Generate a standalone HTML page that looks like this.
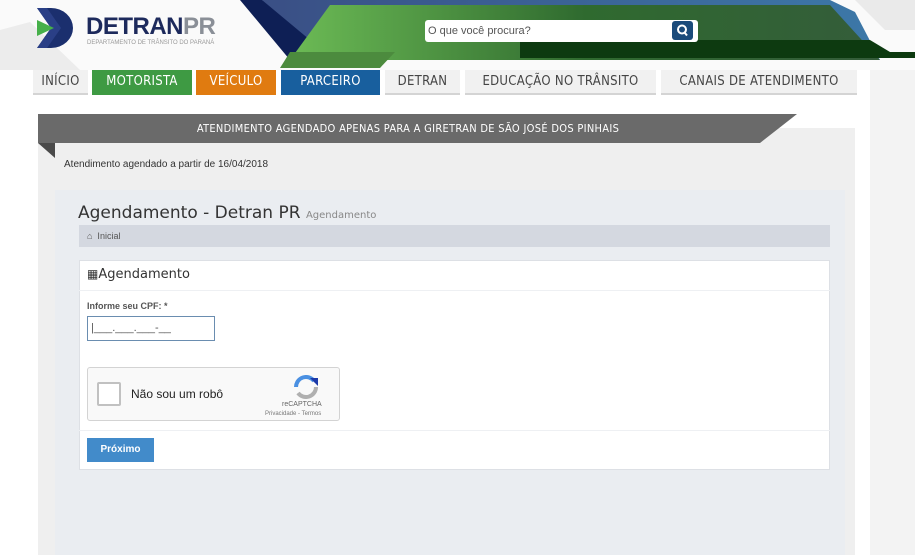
<!DOCTYPE html>
<html><head><meta charset="utf-8"><style>
*{margin:0;padding:0;box-sizing:border-box}
body{width:915px;height:555px;overflow:hidden;background:#fff;font-family:"Liberation Sans",sans-serif;position:relative}
.abs{position:absolute}
.tab{position:absolute;top:70px;height:25px;font:13px/24px "DejaVu Sans Condensed","Liberation Sans",sans-serif;text-align:center;color:#444;background:#f1f1f1;border-bottom:2px solid #d4d4d4;letter-spacing:.3px}
.tab.c{color:#fff;border-bottom-color:transparent}
</style></head><body>
<svg class="abs" style="left:0;top:0" width="915" height="555">
<defs>
<linearGradient id="g1" x1="0" x2="1"><stop offset="0" stop-color="#6cbb55"/><stop offset=".5" stop-color="#2f6a2f"/><stop offset="1" stop-color="#345c3a"/></linearGradient>
<linearGradient id="g2" x1="0" x2="1"><stop offset="0" stop-color="#3a4f85"/><stop offset="1" stop-color="#3c78a8"/></linearGradient>
</defs>
<rect width="915" height="70" fill="#fafafa"/>
<polygon points="0,30 30,22 80,70 0,70" fill="#ececec"/>
<polygon points="855,0 915,0 915,30 885,30" fill="#eaeaea"/>
<polygon points="262,0 830,0 855,12 880,60 300,60" fill="url(#g2)"/>
<polygon points="240,0 262,0 310,40 290,60" fill="#0e1f55"/>
<polygon points="330,5 830,5 880,60 290,60" fill="url(#g1)"/>
<polygon points="520,40 870,40 890,52 915,52 915,58 520,58" fill="#0d3a10"/>
<polygon points="280,68 290,52 395,52 380,68" fill="#4c8b3e"/>
<rect x="870" y="70" width="45" height="485" fill="#f3f3f3"/>
<rect x="38" y="128" width="817" height="430" fill="#efefef"/>
<polygon points="38,114 797,114 760,143 38,143" fill="#6a6a6a"/>
<polygon points="38,143 55,143 55,158" fill="#4a4a4a"/>
<path d="M37,8 h14 a22,20 0 0 1 0,40 h-14 l14,-20 z" fill="#1b2f6e"/>
<path d="M37,8 h10 l14,20 l-14,20 h-10 l14,-20 z" fill="#2a3f86"/>
<polygon points="37,20 54,28 37,36" fill="#46b04a"/>
</svg>
<div class="abs" style="left:86px;top:13px;font:bold 24px/28px 'Liberation Sans',sans-serif;color:#1d2a5c;letter-spacing:-.5px">DETRAN<span style="color:#8a8f97">PR</span></div>
<div class="abs" style="left:87px;top:40px;font:6px 'Liberation Sans',sans-serif;color:#999">DEPARTAMENTO DE TRÂNSITO DO PARANÁ</div>
<div class="abs" style="left:425px;top:20px;width:273px;height:22px;background:#fff;border-radius:3px"></div>
<div class="abs" style="left:428px;top:25px;font:11px 'Liberation Sans',sans-serif;color:#555">O que você procura?</div>
<div class="abs" style="left:672px;top:21px;width:21px;height:19px;background:#1b4b7b;border-radius:3px"><svg width="21" height="19"><circle cx="10" cy="8.5" r="4" fill="none" stroke="#fff" stroke-width="2"/><line x1="12.5" y1="11.5" x2="15" y2="14.5" stroke="#fff" stroke-width="2"/></svg></div>
<div class="tab" style="left:33px;width:55px">INÍCIO</div>
<div class="tab c" style="left:92px;width:100px;background:#3e9a43">MOTORISTA</div>
<div class="tab c" style="left:196px;width:80px;background:#e07b10">VEÍCULO</div>
<div class="tab c" style="left:281px;width:99px;background:#185f9e">PARCEIRO</div>
<div class="tab" style="left:385px;width:75px">DETRAN</div>
<div class="tab" style="left:465px;width:191px">EDUCAÇÃO NO TRÂNSITO</div>
<div class="tab" style="left:661px;width:196px">CANAIS DE ATENDIMENTO</div>
<div class="abs" style="left:38px;top:122px;width:740px;text-align:center;color:#fff;font:11px/14px 'DejaVu Sans Condensed',sans-serif;letter-spacing:.3px">ATENDIMENTO AGENDADO APENAS PARA A GIRETRAN DE SÃO JOSÉ DOS PINHAIS</div>
<div class="abs" style="left:64px;top:159px;font:10px 'Liberation Sans',sans-serif;color:#333">Atendimento agendado a partir de 16/04/2018</div>
<div class="abs" style="left:55px;top:190px;width:790px;height:365px;background:#eaedf1"></div>
<div class="abs" style="left:78px;top:203px;font:17px 'DejaVu Sans',sans-serif;color:#333">Agendamento - Detran PR <span style="font-size:10px;color:#888">Agendamento</span></div>
<div class="abs" style="left:79px;top:225px;width:751px;height:22px;background:#d4d8e0;font:9px/22px 'Liberation Sans',sans-serif;color:#555;padding-left:8px">&#8962; &nbsp;Inicial</div>
<div class="abs" style="left:79px;top:260px;width:751px;height:210px;background:#fff;border:1px solid #dde0e5"></div>
<div class="abs" style="left:79px;top:290px;width:751px;height:1px;background:#eef0f3"></div>
<div class="abs" style="left:79px;top:430px;width:751px;height:1px;background:#eef0f3"></div>
<div class="abs" style="left:87px;top:267px;font:13px 'DejaVu Sans',sans-serif;color:#333"><span style="font-size:12px">&#9638;</span>Agendamento</div>
<div class="abs" style="left:87px;top:301px;font:bold 9px 'Liberation Sans',sans-serif;color:#555">Informe seu CPF: *</div>
<div class="abs" style="left:87px;top:316px;width:128px;height:25px;border:1px solid #6a8db0;background:#fff;font:11px/22px 'Liberation Sans',sans-serif;color:#555;padding-left:3px">|___.___.___-__</div>
<div class="abs" style="left:87px;top:367px;width:253px;height:54px;background:#f9f9f9;border:1px solid #d3d3d3;border-radius:3px"></div>
<div class="abs" style="left:97px;top:382px;width:24px;height:24px;background:#fff;border:2px solid #c1c1c1;border-radius:2px"></div>
<div class="abs" style="left:131px;top:387px;font:12px 'Liberation Sans',sans-serif;color:#222">Não sou um robô</div>
<svg class="abs" style="left:292px;top:375px" width="28" height="24"><path d="M4,12 a10,10 0 0 1 18,-6" fill="none" stroke="#4a90e2" stroke-width="4"/><path d="M24,12 a10,10 0 0 1 -18,6" fill="none" stroke="#b0b0b0" stroke-width="4"/><polygon points="18,3 26,3 26,11" fill="#1c3aa9"/></svg>
<div class="abs" style="left:282px;top:401px;font:7px 'Liberation Sans',sans-serif;color:#666">reCAPTCHA</div>
<div class="abs" style="left:265px;top:411px;font:6px 'Liberation Sans',sans-serif;color:#777">Privacidade - Termos</div>
<div class="abs" style="left:87px;top:438px;width:67px;height:24px;background:#428bca;color:#fff;font:bold 10px/24px 'Liberation Sans',sans-serif;text-align:center">Próximo</div>
</body></html>
